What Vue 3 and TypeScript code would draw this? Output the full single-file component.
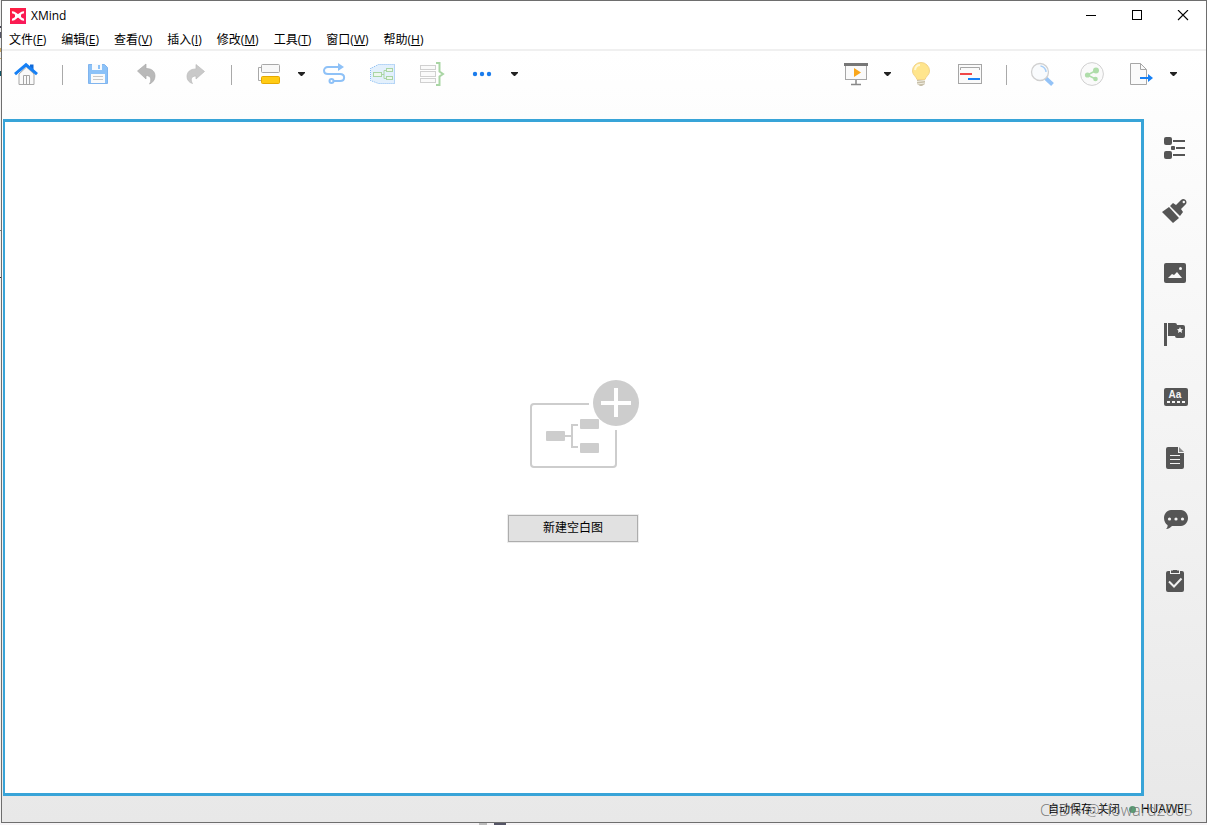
<script setup lang="ts">
interface MenuEntry {
  label: string
  key: string
}

const menus: MenuEntry[] = [
  { label: '文件', key: 'F' },
  { label: '编辑', key: 'E' },
  { label: '查看', key: 'V' },
  { label: '插入', key: 'I' },
  { label: '修改', key: 'M' },
  { label: '工具', key: 'T' },
  { label: '窗口', key: 'W' },
  { label: '帮助', key: 'H' },
]
</script>

<template>
  <div class="desktop">
    <div class="left-edge" aria-hidden="true"></div>
    <div class="window">
      <header class="titlebar">
        <svg class="logo" viewBox="0 0 16 16" aria-hidden="true">
          <defs>
            <linearGradient id="logoFill" x1="0" y1="0" x2="1" y2="1">
              <stop offset="0" stop-color="#ff1f3d" />
              <stop offset="1" stop-color="#f8195f" />
            </linearGradient>
          </defs>
          <rect width="16" height="16" fill="url(#logoFill)" />
          <path d="M2 4.500C5 4 6 7 8 7s3-3 6-2.500M2 11.500C5 12 6 8.500 8 8.500s3 3.500 6 3" fill="none" stroke="#fff" stroke-width="2.200" />
          <path d="M5 6.500h6v3H5z" fill="#fff" />
        </svg>
        <span class="title">XMind</span>
        <div class="controls">
          <button class="control" aria-label="最小化">
            <svg viewBox="0 0 12 12"><path d="M1 5.500h10" stroke="#000" /></svg>
          </button>
          <button class="control" aria-label="最大化">
            <svg viewBox="0 0 12 12"><rect x="1.500" y=".5" width="9" height="9" fill="none" stroke="#000" /></svg>
          </button>
          <button class="control" aria-label="关闭">
            <svg viewBox="0 0 12 12"><path d="M1 0l10 10M11 0L1 10" stroke="#000" stroke-width="1.100" /></svg>
          </button>
        </div>
      </header>

      <nav class="menubar">
        <button v-for="m in menus" :key="m.key" class="menu">{{ m.label }}(<u>{{ m.key }}</u>)</button>
      </nav>

      <div class="workspace">
        <div class="toolbar">
          <div class="tools">
            <button class="tool" aria-label="主页">
              <svg viewBox="0 0 24 24">
                <path d="M5 12v10.500h15V12L12.500 5z" fill="#fafafa" stroke="#a6a6a6" />
                <path d="M9.500 22.500v-9h6v9M12.500 14v8" fill="none" stroke="#a6a6a6" />
                <path d="M16 2.500h3.500V8L16 5z" fill="#1069d8" />
                <path d="M1 12.200L12 2.800l11 9.400" fill="none" stroke="#1680f5" stroke-width="3" />
              </svg>
            </button>
            <span class="rule"></span>
            <button class="tool" aria-label="保存">
              <svg viewBox="0 0 24 24">
                <path d="M1.500 2.500h16l3 3v16h-19z" fill="#8cc2f8" stroke="#80b4ee" />
                <path d="M5 2h10v6H5z" fill="#f7fafd" />
                <path d="M11 3h2v4h-2z" fill="#8cc2f8" />
                <path d="M4 12h14v9H4z" fill="#fafafa" />
                <path d="M6 14.500h10M6 17.500h10" stroke="#c7c7c7" />
              </svg>
            </button>
            <button class="tool" aria-label="撤销">
              <svg viewBox="0 0 24 24">
                <path d="M2.500 9L11 2v4.500c6 0 9 3 9 7.500 0 4-2.500 6.800-5.500 8 2-3 2.300-8.500-3.500-8.500V17z" fill="#b9b9b9" stroke="#ababab" stroke-width=".7" />
              </svg>
            </button>
            <button class="tool" aria-label="重做">
              <svg viewBox="0 0 24 24">
                <path d="M21.500 9.500L13 2.500V7c-6 0-9 3-9 7.500 0 3.500 2 6 5.500 7-2-3-2-7.500 3.500-7.500v3z" fill="#c9c9c9" stroke="#bababa" stroke-width=".7" />
              </svg>
            </button>
            <span class="rule"></span>
            <div class="split">
              <button class="tool" aria-label="主题">
                <svg viewBox="0 0 24 24">
                  <path d="M5 5.500H2.500v13H5" fill="none" stroke="#a8a8a8" />
                  <rect x="5.500" y="2.500" width="18" height="8" rx="1" fill="#f8f8f8" stroke="#a8a8a8" />
                  <rect x="5.500" y="14.500" width="18" height="7" rx="1" fill="#ffcb14" stroke="#e6a900" />
                </svg>
              </button>
              <button class="caret" aria-label="更多主题"><svg viewBox="0 0 10 6"><path d="M2 1h7v1L6 5H5L2 2z" fill="#222" /></svg></button>
            </div>
            <button class="tool after-split" aria-label="联系">
              <svg viewBox="0 0 24 24">
                <g fill="none" stroke="#8ec1f7" stroke-width="2">
                  <path d="M17 5H6C.7 5 .7 12 6 12h12c5.500 0 5.500 7 0 7h-6" />
                  <circle cx="9.500" cy="19" r="2" />
                </g>
                <path d="M16 1l6 4-6 4z" fill="#8ec1f7" />
              </svg>
            </button>
            <button class="tool" aria-label="外框">
              <svg viewBox="0 0 24 24" class="spill">
                <path d="M.5 6.500l8-4h16v19h-16l-8-3z" fill="#e3f0fc" stroke="#80b8f2" stroke-dasharray="1 1" />
                <path d="M24.500 2v20" stroke="#b4d4f5" />
                <g fill="#edf7ec" stroke="#a9d5a4">
                  <path d="M11 12.500h3M17 8.500h-3v8h3" fill="none" />
                  <rect x="3.500" y="10.500" width="8" height="4" />
                  <rect x="16.500" y="6.500" width="6" height="3" />
                  <rect x="16.500" y="14.500" width="6" height="3" />
                </g>
              </svg>
            </button>
            <button class="tool" aria-label="概要">
              <svg viewBox="0 0 24 24" class="spill">
                <g fill="#fafafa" stroke="#d0d0d0">
                  <rect x="2.500" y="3.500" width="15" height="4" />
                  <rect x="2.500" y="9.500" width="15" height="5" />
                  <rect x="2.500" y="16.500" width="15" height="4" />
                </g>
                <path d="M18 1h3.500v8.500L25 12l-3.500 2.500V23H18" fill="none" stroke="#a9d5a4" stroke-width="2" />
              </svg>
            </button>
            <div class="split tight">
              <button class="tool wide" aria-label="更多">
                <svg viewBox="0 0 24 24"><g fill="#1b7cec"><circle cx="5" cy="12" r="2.200" /><circle cx="12" cy="12" r="2.200" /><circle cx="19" cy="12" r="2.200" /></g></svg>
              </button>
              <button class="caret" aria-label="更多选项"><svg viewBox="0 0 10 6"><path d="M1 1h7v1L5 5H4L1 2z" fill="#222" /></svg></button>
            </div>
          </div>

          <div class="tools right">
            <div class="split">
              <button class="tool" aria-label="演示">
                <svg viewBox="0 0 24 24" class="spill">
                  <rect x="2.500" y="3.500" width="21" height="14" fill="#fafafa" stroke="#a6a6a6" />
                  <path d="M1 1h24v3H1z" fill="#777" />
                  <path d="M11 6l7 4.500-7 4.500z" fill="#f9a61a" />
                  <path d="M13 18v4M8 22.500h10" stroke="#888" stroke-width="1.500" />
                </svg>
              </button>
              <button class="caret" aria-label="演示选项"><svg viewBox="0 0 10 6"><path d="M2 1h7v1L6 5H5L2 2z" fill="#222" /></svg></button>
            </div>
            <button class="tool after-split" aria-label="头脑风暴">
              <svg viewBox="0 0 24 24">
                <path d="M12 .5a8.500 8.500 0 0 0-8.500 8.500c0 4 3.500 5 4.500 8.500h8c1-3.500 4.500-4.500 4.500-8.500A8.500 8.500 0 0 0 12 .5z" fill="#ffe58c" stroke="#f2d388" />
                <path d="M6 8c.5-3 2.500-5 5-5" fill="none" stroke="#fff7d4" stroke-width="2" />
                <path d="M8 18h8v4l-3 2h-2l-3-2z" fill="#c7bfa9" />
                <path d="M8 19.500l8-1M8 22l8-1" stroke="#f3efe2" />
              </svg>
            </button>
            <button class="tool" aria-label="甘特图">
              <svg viewBox="0 0 24 24">
                <rect x=".5" y="2.500" width="23" height="19" fill="#fafafa" stroke="#a6a6a6" />
                <path d="M2.500 8V5.500h19V8" fill="none" stroke="#a6a6a6" />
                <path d="M2 12h12" stroke="#f04747" stroke-width="2" />
                <path d="M10 17h12" stroke="#1680f5" stroke-width="2" />
              </svg>
            </button>
            <span class="rule"></span>
            <button class="tool" aria-label="搜索">
              <svg viewBox="0 0 24 24" class="spill">
                <path d="M14.500 16l7 6.500" stroke="#94c3f7" stroke-width="4" />
                <circle cx="9" cy="10" r="8.500" fill="#f9fbfd" stroke="#d0d0d0" stroke-width="1.300" />
                <path d="M9.500 4a6 6 0 0 1 5.500 6" fill="none" stroke="#a8cff7" stroke-width="1.500" />
              </svg>
            </button>
            <button class="tool" aria-label="分享">
              <svg viewBox="0 0 24 24">
                <circle cx="12" cy="12" r="11.400" fill="#fafafa" stroke="#d0d0d0" />
                <path d="M16 8.500L7.500 13l8 4" fill="none" stroke="#afddaa" stroke-width="1.500" />
                <g fill="#afddaa"><circle cx="16" cy="8.500" r="3" /><circle cx="7.500" cy="13" r="2.600" /><circle cx="15.500" cy="17" r="2.300" /></g>
              </svg>
            </button>
            <div class="split">
              <button class="tool" aria-label="导出">
                <svg viewBox="0 0 24 24">
                  <path d="M1.500 1.500h10l6 6v15h-16z" fill="#fafafa" stroke="#a6a6a6" />
                  <path d="M11.500 1.500v6h6" fill="none" stroke="#a6a6a6" />
                  <path d="M11 16h9" stroke="#1680f5" stroke-width="2" />
                  <path d="M19 12l5 4-5 4z" fill="#1680f5" />
                </svg>
              </button>
              <button class="caret" aria-label="导出选项"><svg viewBox="0 0 10 6"><path d="M2 1h7v1L6 5H5L2 2z" fill="#222" /></svg></button>
            </div>
          </div>
        </div>

        <div class="body">
          <main class="editor">
            <svg class="blank-art" viewBox="0 0 132 90" aria-hidden="true">
              <path d="M82 24H27a3 3 0 0 0-3 3v57a3 3 0 0 0 3 3h79a3 3 0 0 0 3-3V50" fill="none" stroke="#cdcdcd" stroke-width="2" />
              <g fill="#cdcdcd">
                <rect x="39" y="51" width="19" height="10" rx="1" />
                <rect x="73" y="39" width="19" height="10" rx="1" />
                <rect x="73" y="63" width="19" height="10" rx="1" />
                <circle cx="109" cy="23" r="23" />
              </g>
              <path d="M58 56h7M71 45h-6v22h6" fill="none" stroke="#cdcdcd" stroke-width="2" />
              <path d="M94 23h30M109 8v29" stroke="#fff" stroke-width="4" />
            </svg>
            <button class="create">新建空白图</button>
          </main>

          <aside class="sidebar">
            <button class="tool" aria-label="大纲">
              <svg viewBox="0 0 24 24">
                <g fill="#555"><rect x="1" y="1" width="8" height="8" rx="2" /><rect x="8" y="10" width="4" height="4" rx="1" /><rect x="1" y="15" width="8" height="8" rx="2" /></g>
                <path d="M10 5h12M13 12h9M10 19h12" stroke="#555" stroke-width="2" />
              </svg>
            </button>
            <button class="tool" aria-label="格式">
              <svg viewBox="0 0 24 24" class="spill">
                <path d="M-1 14l7-5 10 11-6 5z" fill="#555" />
                <path d="M7 8l3-3 3 2 5-5c3-3 7 1 5 4l-5 5 2 3-3 4z" fill="#555" />
                <circle cx="20.800" cy="4" r="1.200" fill="#f9f9f9" />
              </svg>
            </button>
            <button class="tool" aria-label="图片">
              <svg viewBox="0 0 24 24">
                <rect x="1" y="3" width="22" height="20" rx="2" fill="#555" />
                <path d="M5 18l4-4 2 1 3-3 5 6z" fill="#f8f8f8" />
                <circle cx="17.500" cy="8.500" r="1.500" fill="#f8f8f8" />
              </svg>
            </button>
            <button class="tool" aria-label="图标">
              <svg viewBox="0 0 24 24">
                <path d="M1 1h3v23H1zM5 1h7a2 2 0 0 1 2 2h6a2 2 0 0 1 2 2v9a2 2 0 0 1-2 2h-6a2 2 0 0 1-2-2H5z" fill="#555" />
                <path d="M17 5l1 2 2 .2-1.400 1.500.4 2.300-2-1.200-2 1.200.4-2.300L14 7.200l2-.2z" fill="#f6f6f6" />
              </svg>
            </button>
            <button class="tool" aria-label="标签">
              <svg viewBox="0 0 24 24" class="spill">
                <rect x="1" y="4" width="24" height="18" rx="2" fill="#555" />
                <text x="12" y="14" text-anchor="middle" class="aa">Aa</text>
                <path d="M4 18h18" stroke="#f5f5f5" stroke-width="2" stroke-dasharray="3 2" />
              </svg>
            </button>
            <button class="tool" aria-label="备注">
              <svg viewBox="0 0 24 24">
                <path d="M5 1h10v6h6v14a2 2 0 0 1-2 2H5a2 2 0 0 1-2-2V3a2 2 0 0 1 2-2z" fill="#555" />
                <path d="M16 1l5 5h-5z" fill="#8c8c8c" />
                <path d="M7 9.500h10M7 13.500h10M7 17.500h10" stroke="#f3f3f3" />
              </svg>
            </button>
            <button class="tool" aria-label="批注">
              <svg viewBox="0 0 24 24" class="spill">
                <path d="M8 2h10c4 0 7 4 7 8s-3 8-7 8H9c-1.500 1.500-3 3-6 3 1-1 2-2.500 1.500-4C2.500 16 1 13 1 10c0-4 3-8 7-8z" fill="#555" />
                <g fill="#f2f2f2"><circle cx="6.500" cy="11" r="1.600" /><circle cx="13" cy="11" r="1.600" /><circle cx="19.500" cy="11" r="1.600" /></g>
              </svg>
            </button>
            <button class="tool" aria-label="任务">
              <svg viewBox="0 1 24 24">
                <path d="M5 2h2v3h10V2h2a2 2 0 0 1 2 2v17a2 2 0 0 1-2 2H5a2 2 0 0 1-2-2V4a2 2 0 0 1 2-2z" fill="#555" />
                <path d="M8 1.500h2V0h4v1.500h2V4H8z" fill="#555" />
                <path d="M6 12.500l5 5 7.500-8" fill="none" stroke="#f0f0f0" stroke-width="2" />
              </svg>
            </button>
          </aside>
        </div>

        <footer class="status">
          <span class="saving">自动保存: 关闭</span>
          <span class="online"></span>
          <span class="host">HUAWEI</span>
          <span class="watermark">CSDN @Howard2005</span>
        </footer>
      </div>
    </div>
    <div class="below" aria-hidden="true"><span></span><span class="dark"></span></div>
  </div>
</template>

<style>
body {
  margin: 0;
  background: #f6f4f6;
}
</style>

<style scoped>
.desktop {
  display: grid;
  grid-template-columns: 1px 1fr;
  grid-template-rows: 1fr 2px;
  min-height: 100vh;
  font: 12px/16px "Open Sans", "Noto Sans CJK SC", sans-serif;
  color: #000;
}
.left-edge {
  background: linear-gradient(#eee 0 26px, #445 26px 28px, #eee 28px 32px, #556 32px 38px, #eee 38px 48px, #c9a866 48px 52px, #eee 52px 58px, #c9a866 58px 59px, #eee 59px 71px, #156 71px 76px, #f3f3f3 76px 230px, #777 230px 231px, #f3f3f3 231px 277px, #333 277px 278px, #f3f3f3 278px);
}
.window {
  display: flex;
  flex-direction: column;
  border: 1px solid #6e6e6e;
  background: #fff;
}
.titlebar {
  display: flex;
  align-items: center;
  height: 29px;
  padding-left: 8px;
}
.logo {
  width: 16px;
  height: 16px;
}
.title {
  margin-left: 5px;
}
.controls {
  display: flex;
  margin-left: auto;
}
button {
  display: flex;
  align-items: center;
  justify-content: center;
  padding: 0;
  border: 0;
  background: none;
  color: inherit;
  font: inherit;
}
.control {
  width: 46px;
  height: 29px;
}
.control svg {
  width: 12px;
  height: 12px;
}
.menubar {
  display: flex;
  gap: 15px;
  height: 17px;
  padding: 2px 0 0 7px;
  border-bottom: 2px solid #f0f0f0;
}
.menu {
  display: block;
  height: 16px;
  white-space: nowrap;
}
.menu u {
  text-underline-offset: 1px;
}
.workspace {
  flex: 1;
  display: flex;
  flex-direction: column;
  background: linear-gradient(#fff, #e8e8e8);
}
.toolbar {
  display: flex;
  justify-content: space-between;
  height: 57px;
  padding: 11px 28px 0 12px;
}
.tools {
  display: flex;
  gap: 24px;
  height: 24px;
}
.tool {
  width: 24px;
  height: 24px;
}
.tool svg {
  width: 24px;
  height: 24px;
}
.spill {
  overflow: visible;
}
.wide {
  width: 32px;
}
.rule {
  width: 1px;
  height: 20px;
  margin-top: 3px;
  background: #a9a9a9;
}
.split {
  display: flex;
  gap: 16px;
}
.tight {
  gap: 12px;
}
.right {
  gap: 25px;
}
.right .split {
  gap: 15px;
}
.right .rule {
  margin-right: -1px;
  margin-left: -1px;
}
.after-split {
  margin-left: -8px;
}
.caret {
  width: 10px;
  height: 24px;
}
.caret svg {
  width: 10px;
  height: 6px;
}
.body {
  flex: 1;
  display: flex;
}
.editor {
  flex: 1;
  display: flex;
  flex-direction: column;
  align-items: center;
  justify-content: center;
  margin-left: 1px;
  padding-top: 6px;
  border: 3px solid #38a4d8;
  border-left-width: 2px;
  background: #fff;
}
.blank-art {
  width: 132px;
  height: 90px;
}
.create {
  width: 130px;
  height: 27px;
  margin-top: 45px;
  border: 1px solid #adadad;
  outline: 1px solid #ededed;
  background: #e1e1e1;
}
.sidebar {
  display: flex;
  flex-direction: column;
  align-items: center;
  gap: 38px;
  width: 62px;
  padding-top: 17px;
}
.aa {
  font: bold 10px "Liberation Sans", sans-serif;
  fill: #f5f5f5;
}
.status {
  position: relative;
  display: flex;
  align-items: center;
  justify-content: flex-end;
  height: 26px;
  padding-right: 19px;
}
.saving {
  font-size: 11px;
}
.online {
  width: 7px;
  height: 7px;
  margin: 0 5px 0 9px;
  border-radius: 50%;
  background: #5a9c75;
}
.watermark {
  position: absolute;
  top: 6px;
  right: 13px;
  font-size: 16px;
  font-family: "Open Sans", sans-serif;
  font-weight: 300;
  color: rgba(110, 110, 110, 0.9);
}
.below {
  grid-column: 1 / 3;
  display: flex;
  gap: 7px;
  padding-left: 479px;
}
.below span {
  width: 8px;
  background: #bbb;
}
.below .dark {
  width: 12px;
  background: #556;
}
</style>
